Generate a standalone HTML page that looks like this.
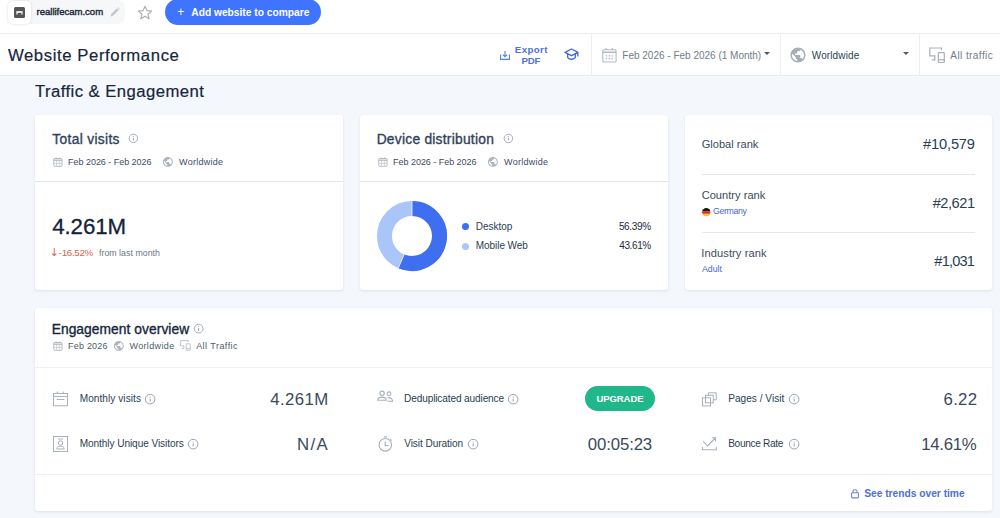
<!DOCTYPE html>
<html lang="en">
<head>
<meta charset="utf-8">
<title>Website Performance</title>
<style>
*{box-sizing:border-box;margin:0;padding:0}
html,body{width:1000px;height:518px;overflow:hidden;background:#f4f7fb;font-family:"Liberation Sans",sans-serif;color:#2a3e52}
.abs{position:absolute}
.t{position:absolute;white-space:nowrap;line-height:1}
#top{position:absolute;left:0;top:0;width:1000px;height:34px;background:#fff;border-bottom:1px solid #eceef2}
#chip{position:absolute;left:8px;top:0;width:117px;height:24px;background:#f6f7f9;border-radius:7px}
#fav{position:absolute;left:0;top:1px;width:23px;height:23px;background:#fff;border-radius:5px;box-shadow:0 0 3px rgba(0,0,0,.14)}
#btn{position:absolute;left:165px;top:-1px;width:156px;height:26px;border-radius:13px;background:#3e74fe}
#hdr{position:absolute;left:0;top:34px;width:1000px;height:42px;background:#fff;border-bottom:1px solid #e8ebf0}
.vsep{position:absolute;top:0;width:1px;height:41px;background:#eceef2}
.card{position:absolute;background:#fff;border-radius:3px;box-shadow:0 1px 3px rgba(30,50,80,.10)}
.hl{position:absolute;left:0;height:1px;background:#e3e6ea}
.caret{position:absolute;border:3.2px solid transparent;border-top:3.6px solid #4a5a6c;border-bottom:0}
.dot{position:absolute;width:7px;height:7px;border-radius:50%}
svg{position:absolute;overflow:visible}
</style>
</head>
<body>
<svg width="0" height="0" style="position:absolute">
  <defs>
    <g id="cal" fill="none" stroke="#b3b9c1"><rect x="0.700" y="1.500" width="8.400" height="7.800" rx="0.600" stroke-width="0.900"/><path d="M0.700 3.200 H9.100" stroke-width="1.300"/><path d="M3.200 0.400 V1.800 M6.600 0.400 V1.800" stroke-width="1.200"/><path d="M3.500 4 V9 M6.300 4 V9 M1 6.400 H9" stroke-width="0.600"/></g>
    <path id="globe" d="M12 2C6.48 2 2 6.48 2 12s4.48 10 10 10 10-4.48 10-10S17.52 2 12 2zm-1 17.93c-3.95-.49-7-3.85-7-7.930 0-.62.08-1.210.21-1.790L9 15v1c0 1.100.9 2 2 2v1.930zm6.900-2.540c-.26-.810-1-1.390-1.900-1.390h-1v-3c0-.55-.45-1-1-1H8v-2h2c.55 0 1-.45 1-1V7h2c1.100 0 2-.9 2-2v-.41c2.930 1.190 5 4.060 5 7.410 0 2.080-.8 3.970-2.100 5.390z"/>
    <g id="dev"><path d="M12.500 3 V1 H0.800 V8.800 H5.800 V12.800 H2.800" fill="none" stroke-width="1.200"/><rect x="9.300" y="5.700" width="6" height="9.800" rx="0.500" fill="none" stroke-width="1.200"/><path d="M9.300 12.800 H15.300" fill="none" stroke-width="1.200"/></g>
    <g id="info"><circle cx="6" cy="6" r="4.700" fill="none" stroke-width="0.950"/><path d="M6 5.300 V8.400 M6 3.300 V4.300" fill="none" stroke-width="1"/></g>
  </defs>
</svg>
<div id="top">
  <div id="chip"><div id="fav"></div></div>
  <svg style="left:14px;top:7px" width="11" height="11" viewBox="0 0 11 11"><rect width="11" height="11" rx="1.5" fill="#555"/><path d="M2.3 4 H8.7 V7.6 H7.3 V6 H3.7 V7.6 H2.3 Z" fill="#e4e4e4"/></svg>
  <svg style="left:110px;top:7px" width="10" height="10" viewBox="0 0 10 10"><path d="M0.6 9.4 L1.2 6.9 L6.9 1.2 L8.8 3.1 L3.1 8.800 Z" fill="#c3c7ce"/><path d="M7.5 0.6 L8.100 0 L10 1.900 L9.400 2.500 Z" fill="#c9cdd3"/></svg>
  <svg style="left:137px;top:5px" width="16" height="15" viewBox="0 0 16 15"><path d="M8 1.3 L9.9 5.600 L14.600 6 L11 9.100 L12.100 13.700 L8 11.300 L3.900 13.700 L5 9.100 L1.400 6 L6.100 5.600 Z" fill="none" stroke="#a9afb8" stroke-width="1.2" stroke-linejoin="round"/></svg>
  <div id="btn"></div>
  <div class="t" style="left:36.57px;top:7.01px;font-size:9.6px;letter-spacing:-0.043px;color:#1b2a3a;-webkit-text-stroke:.4px #1b2a3a">reallifecam.com</div>
  <div class="t" style="left:177.21px;top:6.01px;font-size:12px;letter-spacing:1.114px;color:#fff">+</div>
  <div class="t" style="left:191.26px;top:8.01px;font-size:10.25px;letter-spacing:-0.015px;font-weight:bold;color:#fff">Add website to compare</div>
</div>
<div id="hdr">
  <svg style="left:500px;top:17px" width="10" height="9" viewBox="0 0 10 9"><path d="M0.600 3.500 V8.400 H9.400 V3.500 M5 0 V5.500 M2.800 3.600 L5 5.800 L7.200 3.600" fill="none" stroke="#5b7de2" stroke-width="1.100"/></svg>
  <svg style="left:564px;top:14px" width="15" height="13" viewBox="0 0 15 13"><path d="M7.5 1 L14 4.300 L7.500 7.600 L1 4.300 Z M3.700 6 V9.600 C5.500 11.800 9.500 11.800 11.300 9.600 V6 M13.800 4.500 V8.500" fill="none" stroke="#3e68d8" stroke-width="1.300" stroke-linejoin="round"/></svg>
  <div class="vsep" style="left:591px"></div>
  <svg style="left:601.500px;top:13.500px" width="15" height="15" viewBox="0 0 15 15" fill="none" stroke="#b3b9c1" stroke-width="1.100"><rect x="0.800" y="1.800" width="13.300" height="12.200" rx="1"/><path d="M0.800 4.300 H14.100 M4 0.300 V2 M10.300 0.300 V2" stroke-width="1.600"/><path d="M3.700 7.800 H11.500 M3.700 10.600 H11.500" stroke-width="1.200" stroke-dasharray="1.600 1.200"/></svg>
  <div class="caret" style="left:763.8px;top:18px"></div>
  <div class="vsep" style="left:780px"></div>
  <svg style="left:788.500px;top:11.500px" width="18" height="18" viewBox="0 0 24 24" fill="#a7aeb8"><use href="#globe"/></svg>
  <div class="caret" style="left:902.500px;top:18px"></div>
  <div class="vsep" style="left:919px"></div>
  <svg style="left:928.500px;top:12.500px" width="16" height="16" viewBox="0 0 16 16" stroke="#a9b0ba"><use href="#dev"/></svg>
  <h1 class="t" style="left:7.91px;top:14.01px;font-size:16.7px;letter-spacing:0.600px;font-weight:normal;color:#16263c;-webkit-text-stroke:.2px #16263c">Website Performance</h1>
  <div class="t" style="left:514.87px;top:11.01px;font-size:9.7px;letter-spacing:0.381px;font-weight:bold;color:#4d72de">Export</div>
  <div class="t" style="left:521.4px;top:22.01px;font-size:9.7px;letter-spacing:-0.143px;font-weight:bold;color:#4d72de">PDF</div>
  <div class="t" style="left:622.31px;top:17px;font-size:10px;letter-spacing:-0.003px;color:#707c89">Feb 2026 - Feb 2026 (1 Month)</div>
  <div class="t" style="left:811.76px;top:17px;font-size:10px;letter-spacing:0.122px;color:#2a3e52">Worldwide</div>
  <div class="t" style="left:950.34px;top:17px;font-size:10px;letter-spacing:0.424px;color:#707c89">All traffic</div>
</div>
  <h2 class="t" style="left:34.92px;top:84px;font-size:16.7px;letter-spacing:0.446px;font-weight:normal;color:#16263c;-webkit-text-stroke:.2px #16263c">Traffic &amp; Engagement</h2>

<div class="card" style="left:35px;top:115px;width:308px;height:175px">
  <svg style="left:17.500px;top:41.600px" width="10" height="10" viewBox="0 0 10 10"><use href="#cal"/></svg>
  <svg style="left:126.820px;top:40.620px" width="11.760" height="11.760" viewBox="0 0 24 24" fill="#adb3bc"><use href="#globe"/></svg>
  <div class="hl" style="top:66px;width:308px"></div>
  <svg style="left:93.21px;top:17.51px" width="10.77" height="10.77" viewBox="0 0 12 12" stroke="#98a1ac"><use href="#info"/></svg>
  <div class="t" style="left:17.34px;top:18.01px;font-size:13.8px;letter-spacing:0.320px;color:#30425a;-webkit-text-stroke:.35px #30425a">Total visits</div>
  <div class="t" style="left:33.06px;top:43.01px;font-size:9.0px;letter-spacing:-0.031px;color:#3d4d5e">Feb 2026 - Feb 2026</div>
  <div class="t" style="left:144.1px;top:43.01px;font-size:9.0px;letter-spacing:0.258px;color:#3d4d5e">Worldwide</div>
  <div class="t" style="left:17.13px;top:101.01px;font-size:22.3px;letter-spacing:-0.078px;color:#13233a;-webkit-text-stroke:.3px #13233a">4.261M</div>
  <div class="t" style="left:14.72px;top:132.01px;font-size:11px;letter-spacing:4.376px;color:#e2604f;font-family:DejaVu Sans,sans-serif">↓</div>
  <div class="t" style="left:23.76px;top:133px;font-size:9.8px;letter-spacing:-0.336px;color:#e2604f">-16.52%</div>
  <div class="t" style="left:63.96px;top:134px;font-size:8.8px;letter-spacing:0.026px;color:#6b7886">from last month</div>
</div>

<div class="card" style="left:360px;top:115px;width:308px;height:175px">
  <svg style="left:17.500px;top:41.600px" width="10" height="10" viewBox="0 0 10 10"><use href="#cal"/></svg>
  <svg style="left:126.820px;top:40.620px" width="11.760" height="11.760" viewBox="0 0 24 24" fill="#adb3bc"><use href="#globe"/></svg>
  <div class="hl" style="top:66px;width:308px"></div>
  <svg style="left:16.500px;top:86px" width="70" height="70" viewBox="-35 -35 70 70">
    <circle r="27.500" fill="none" stroke="#a9c5f9" stroke-width="15"/>
    <path d="M0 -27.500 A27.500 27.500 0 1 1 -10.760 25.310" fill="none" stroke="#3f6ff0" stroke-width="15"/>
    <path d="M0 -35 V-20 M-7.830 18.400 L-13.700 32.200" stroke="#fff" stroke-width="0.800" fill="none"/>
  </svg>
  <div class="dot" style="left:102.400px;top:108px;background:#3f6ff0"></div>
  <div class="dot" style="left:102.400px;top:127.500px;background:#a9c5f9"></div>
  <svg style="left:142.51px;top:17.51px" width="10.77" height="10.77" viewBox="0 0 12 12" stroke="#98a1ac"><use href="#info"/></svg>
  <div class="t" style="left:16.66px;top:18.01px;font-size:13.8px;letter-spacing:0.247px;color:#30425a;-webkit-text-stroke:.35px #30425a">Device distribution</div>
  <div class="t" style="left:33.06px;top:43.01px;font-size:9.0px;letter-spacing:-0.031px;color:#3d4d5e">Feb 2026 - Feb 2026</div>
  <div class="t" style="left:144.1px;top:43.01px;font-size:9.0px;letter-spacing:0.258px;color:#3d4d5e">Worldwide</div>
  <div class="t" style="left:115.78px;top:107px;font-size:10px;letter-spacing:-0.024px;color:#2a3e52">Desktop</div>
  <div class="t" style="left:258.88px;top:107px;font-size:10px;letter-spacing:-0.322px;color:#1b2a3e">56.39%</div>
  <div class="t" style="left:115.79px;top:126px;font-size:10px;letter-spacing:-0.057px;color:#2a3e52">Mobile Web</div>
  <div class="t" style="left:259.3px;top:126px;font-size:10px;letter-spacing:-0.407px;color:#1b2a3e">43.61%</div>
</div>

<div class="card" style="left:685px;top:115px;width:307px;height:175px">
  <div class="hl" style="left:17px;top:59px;width:273px"></div>
  <svg style="left:17px;top:92.700px" width="8.600" height="8.600" viewBox="0 0 8.600 8.600"><defs><clipPath id="fc"><circle cx="4.300" cy="4.300" r="4.200"/></clipPath></defs><g clip-path="url(#fc)"><rect width="8.600" height="3.200" fill="#1d1414"/><rect y="3.200" width="8.600" height="2.600" fill="#d8232a"/><rect y="5.800" width="8.600" height="2.800" fill="#f8c820"/></g></svg>
  <div class="hl" style="left:17px;top:117px;width:273px"></div>
  <div class="t" style="left:16.67px;top:24.01px;font-size:11.1px;letter-spacing:-0.003px;color:#3a4b5c">Global rank</div>
  <div class="t" style="left:238.09px;top:22.01px;font-size:14.64px;letter-spacing:-0.163px;color:#2a3e52">#10,579</div>
  <div class="t" style="left:16.67px;top:75.01px;font-size:11.1px;letter-spacing:0.013px;color:#3a4b5c">Country rank</div>
  <div class="t" style="left:28.08px;top:92.01px;font-size:8.8px;letter-spacing:-0.397px;color:#4468d8">Germany</div>
  <div class="t" style="left:247.71px;top:81px;font-size:14.64px;letter-spacing:-0.485px;color:#2a3e52">#2,621</div>
  <div class="t" style="left:16.28px;top:133.01px;font-size:11.1px;letter-spacing:0.099px;color:#3a4b5c">Industry rank</div>
  <div class="t" style="left:17.05px;top:150px;font-size:8.8px;letter-spacing:-0.053px;color:#4468d8">Adult</div>
  <div class="t" style="left:249.33px;top:139.01px;font-size:14.64px;letter-spacing:-0.813px;color:#2a3e52">#1,031</div>
</div>

<div class="card" style="left:35px;top:308px;width:957px;height:203px">
  <svg style="left:17.500px;top:32.800px" width="10" height="10" viewBox="0 0 10 10"><use href="#cal"/></svg>
  <svg style="left:77.92px;top:31.72px" width="11.760" height="11.760" viewBox="0 0 24 24" fill="#adb3bc"><use href="#globe"/></svg>
  <svg style="left:144.700px;top:32.300px" width="10.700" height="10.700" viewBox="0 0 16 16" stroke="#b0b6bf"><use href="#dev"/></svg>
  <div class="hl" style="top:59px;width:957px;background:#eff1f4"></div>

  <svg style="left:17.500px;top:82.500px" width="15" height="15" viewBox="0 0 15 15" fill="none" stroke="#aab1ba" stroke-width="1"><rect x="0.5" y="2.500" width="14" height="12.300"/><path d="M4.300 0.500 V2.500 M10.300 0.500 V2.500 M0.500 5.500 H14.500 M3.800 8.500 H11.300"/></svg>

  <svg style="left:341.500px;top:82px" width="16.500" height="12" viewBox="0 0 16.500 12" fill="none" stroke="#aab1ba" stroke-width="1.100"><circle cx="5.100" cy="3.300" r="2.200"/><path d="M0.700 10.300 C0.700 6 9.300 6 9.300 10.300 Z"/><circle cx="12" cy="3.800" r="1.900"/><path d="M10.600 7.700 C13.200 7.300 15.600 8.700 15.600 11.300 H10.300"/></svg>
  <div class="abs" style="left:550px;top:77.500px;width:70px;height:25.500px;border-radius:13px;background:#20b78b"></div>

  <svg style="left:666.500px;top:83.500px" width="15" height="15" viewBox="0 0 15 15" fill="none" stroke="#aab1ba" stroke-width="1"><path d="M6.500 3.300 V0.800 H14.300 V7.800 H11.300"/><rect x="3.500" y="3.300" width="7.800" height="7.500"/><rect x="0.500" y="5.800" width="8" height="8.100"/></svg>

  <svg style="left:17.500px;top:127.500px" width="15" height="16" viewBox="0 0 15 16" fill="none" stroke="#aab1ba" stroke-width="1"><rect x="0.500" y="0.500" width="14" height="15"/><path d="M5 3 H10"/><circle cx="7.500" cy="7" r="2.200"/><path d="M3.800 13 C3.800 10.400 6 10.300 7.500 10.300 C9 10.300 11.200 10.400 11.200 13 Z"/></svg>

  <svg style="left:342.500px;top:127.500px" width="15" height="16" viewBox="0 0 15 16" fill="none" stroke="#aab1ba" stroke-width="1.150"><circle cx="7.300" cy="8.800" r="6.300"/><path d="M7.200 5.500 V9.600 H10.500 M5.800 0.900 H8.800 M12.200 3.100 L13.700 4.600"/></svg>

  <svg style="left:666.500px;top:128.500px" width="15" height="14" viewBox="0 0 15 14" fill="none" stroke="#aab1ba" stroke-width="1.100"><path d="M1 4 L5.500 9 L13.300 1 M9.800 0.800 H13.500 V4.500 M0.500 10 V12.800 H14.300 V10"/></svg>

  <div class="hl" style="top:166px;width:957px;background:#eceef2"></div>
  <svg style="left:816px;top:180.500px" width="8" height="9.500" viewBox="0 0 8 9.500"><rect x="0.600" y="3.800" width="6.800" height="5.100" rx="0.800" fill="none" stroke="#7483cc" stroke-width="1.100"/><path d="M2 3.800 V2.400 C2 0.200 6 0.200 6 2.400 V3.800" fill="none" stroke="#7483cc" stroke-width="1.100"/></svg>
  <svg style="left:157.88px;top:14.78px" width="11.24" height="11.24" viewBox="0 0 12 12" stroke="#98a1ac"><use href="#info"/></svg>
  <svg style="left:109.10px;top:84.65px" width="12.29" height="12.29" viewBox="0 0 12 12" stroke="#98a1ac"><use href="#info"/></svg>
  <svg style="left:472.35px;top:84.65px" width="12.29" height="12.29" viewBox="0 0 12 12" stroke="#98a1ac"><use href="#info"/></svg>
  <svg style="left:752.55px;top:84.65px" width="12.29" height="12.29" viewBox="0 0 12 12" stroke="#98a1ac"><use href="#info"/></svg>
  <svg style="left:152.05px;top:130.05px" width="12.29" height="12.29" viewBox="0 0 12 12" stroke="#98a1ac"><use href="#info"/></svg>
  <svg style="left:431.85px;top:130.05px" width="12.29" height="12.29" viewBox="0 0 12 12" stroke="#98a1ac"><use href="#info"/></svg>
  <svg style="left:752.55px;top:130.05px" width="12.29" height="12.29" viewBox="0 0 12 12" stroke="#98a1ac"><use href="#info"/></svg>
  <div class="t" style="left:16.66px;top:15.01px;font-size:13.8px;letter-spacing:0.054px;color:#16263c;-webkit-text-stroke:.35px #16263c">Engagement overview</div>
  <div class="t" style="left:33.06px;top:34.01px;font-size:9.0px;letter-spacing:0.206px;color:#4d5b6b">Feb 2026</div>
  <div class="t" style="left:94.44px;top:34.01px;font-size:9.0px;letter-spacing:0.362px;color:#4d5b6b">Worldwide</div>
  <div class="t" style="left:161.15px;top:34.01px;font-size:9.0px;letter-spacing:0.457px;color:#4d5b6b">All Traffic</div>
  <div class="t" style="left:44.73px;top:86.01px;font-size:10.1px;letter-spacing:0.050px;color:#2a3e52">Monthly visits</div>
  <div class="t" style="left:235.31px;top:84.01px;font-size:16.8px;letter-spacing:0.409px;color:#3a4a5c">4.261M</div>
  <div class="t" style="left:369.05px;top:86.01px;font-size:10.1px;letter-spacing:-0.131px;color:#2a3e52">Deduplicated audience</div>
  <div class="t" style="left:561.47px;top:86.01px;font-size:9.5px;letter-spacing:-0.078px;font-weight:bold;color:#fff">UPGRADE</div>
  <div class="t" style="left:693.23px;top:86.01px;font-size:10.1px;letter-spacing:0.009px;color:#2a3e52">Pages / Visit</div>
  <div class="t" style="left:908.53px;top:84.01px;font-size:16.8px;letter-spacing:0.289px;color:#3a4a5c">6.22</div>
  <div class="t" style="left:44.73px;top:131px;font-size:10.1px;letter-spacing:-0.082px;color:#2a3e52">Monthly Unique Visitors</div>
  <div class="t" style="left:262.09px;top:129.01px;font-size:16.8px;letter-spacing:1.296px;color:#3a4a5c">N/A</div>
  <div class="t" style="left:369.17px;top:131px;font-size:10.1px;letter-spacing:-0.060px;color:#2a3e52">Visit Duration</div>
  <div class="t" style="left:552.85px;top:129.01px;font-size:16.8px;letter-spacing:-0.138px;color:#3a4a5c">00:05:23</div>
  <div class="t" style="left:693.23px;top:131px;font-size:10.1px;letter-spacing:-0.331px;color:#2a3e52">Bounce Rate</div>
  <div class="t" style="left:886.2px;top:129.01px;font-size:16.8px;letter-spacing:-0.296px;color:#3a4a5c">14.61%</div>
  <div class="t" style="left:829.23px;top:181.01px;font-size:10.25px;letter-spacing:-0.021px;font-weight:bold;color:#4d6fdc">See trends over time</div>
</div>
</body>
</html>
